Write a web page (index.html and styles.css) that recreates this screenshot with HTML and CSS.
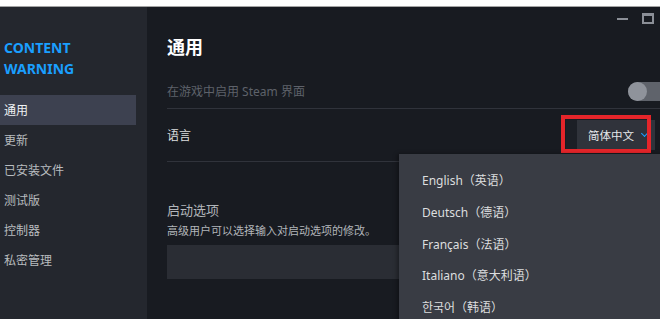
FILE: index.html
```html
<!DOCTYPE html>
<html lang="zh-CN">
<head>
  <meta charset="UTF-8">
  <title>通用</title>
  <link rel="stylesheet" href="styles.css">
</head>
<body>
  <div class="topstrip"></div>
  <div class="app">
    <aside class="sidebar">
      <div class="game-title">CONTENT<br>WARNING</div>
      <ul class="nav">
        <li class="nav-item active">通用</li>
        <li class="nav-item">更新</li>
        <li class="nav-item">已安装文件</li>
        <li class="nav-item">测试版</li>
        <li class="nav-item">控制器</li>
        <li class="nav-item">私密管理</li>
      </ul>
    </aside>

    <main class="main">
      <div class="titlebar">
        <span class="win-min"></span>
        <span class="win-max"></span>
      </div>

      <h1 class="page-title">通用</h1>

      <div class="row row-overlay">
        <span class="dim">在游戏中启用 Steam 界面</span>
        <span class="toggle"><span class="knob"></span></span>
      </div>

      <div class="row row-lang">
        <span>语言</span>
        <div class="select">
          <span class="select-label">简体中文</span>
          <span class="chevron"></span>
          <span class="highlight"></span>
        </div>
      </div>

      <section class="launch">
        <div class="launch-title">启动选项</div>
        <div class="launch-desc">高级用户可以选择输入对启动选项的修改。</div>
        <div class="launch-input"></div>
      </section>

      <ul class="menu">
        <li>English（英语）</li>
        <li>Deutsch（德语）</li>
        <li>Français（法语）</li>
        <li>Italiano（意大利语）</li>
        <li>한국어（韩语）</li>
      </ul>
    </main>
  </div>
</body>
</html>
```

FILE: styles.css
```css
* {
  margin: 0;
  padding: 0;
  box-sizing: border-box;
}

body {
  width: 660px;
  height: 319px;
  overflow: hidden;
  background: #181b21;
  font-family: "Noto Sans", "Noto Sans CJK SC", sans-serif;
  font-size: 12px;
  color: #dcdedf;
}

.topstrip {
  height: 7px;
  background: #fff;
  border-bottom: 1px solid #a4a4a4;
}

.app {
  display: flex;
  width: 672px;
  height: 312px;
}

/* left nav */
.sidebar {
  width: 147px;
  flex-shrink: 0;
  background: #24272e;
}

.game-title {
  padding: 30px 0 0 4px;
  color: #1a9fff;
  font-size: 14px;
  font-weight: bold;
  line-height: 21px;
  height: 88px;
}

.nav {
  list-style: none;
}

.nav-item {
  height: 30px;
  width: 136px;
  line-height: 31px;
  padding-left: 4px;
  color: #b8bcbf;
}

.nav-item.active {
  background: #3d4150;
  color: #f0f2f4;
}

/* main panel */
.main {
  flex: 1;
  position: relative;
  padding-left: 20px;
  padding-right: 4px;
}

.titlebar {
  height: 23px;
  display: flex;
  justify-content: flex-end;
  align-items: center;
  gap: 14px;
  padding-right: 14px;
}

.win-min {
  width: 11px;
  height: 2px;
  background: #8b8f97;
}

.win-max {
  width: 12px;
  height: 11px;
  border: 2px solid #8b8f97;
  border-top-width: 3px;
}

.page-title {
  height: 34px;
  line-height: 34px;
  font-size: 18px;
  font-weight: bold;
  color: #fff;
}

.row {
  display: flex;
  justify-content: space-between;
  align-items: center;
  border-bottom: 1px solid #30333b;
}

.row-overlay {
  height: 45px;
  padding-top: 10px;
}

.dim {
  color: #5e626a;
}

.toggle {
  width: 40px;
  height: 19px;
  border-radius: 10px;
  background: #5f636b;
  position: relative;
}

.knob {
  position: absolute;
  left: 0;
  top: 0;
  width: 19px;
  height: 19px;
  border-radius: 50%;
  background: #8f939b;
}

.row-lang {
  height: 53px;
}

.select {
  position: relative;
  width: 89px;
  height: 30px;
  margin-right: 13px;
  display: flex;
  align-items: center;
  padding-left: 22px;
  background: linear-gradient(to right, #1c1f26 11px, #30333b 11px);
  color: #e6e8ea;
  font-size: 11.5px;
}

.chevron {
  margin-left: 8px;
  width: 5px;
  height: 5px;
  border-right: 1.5px solid #1a9fff;
  border-bottom: 1.5px solid #1a9fff;
  transform: rotate(45deg);
  margin-top: -3px;
}

/* red annotation box */
.highlight {
  position: absolute;
  left: -5px;
  top: -5px;
  width: 90px;
  height: 38px;
  border: 4px solid #e5252a;
}

.launch {
  padding-top: 39px;
}

.launch-title {
  font-size: 13px;
  line-height: 18px;
  color: #b2b6ba;
}

.launch-desc {
  margin-top: 4px;
  font-size: 11px;
  line-height: 16px;
  color: #b2b6ba;
}

.launch-input {
  margin-top: 6px;
  height: 34px;
  background: #2a2d34;
}

/* dropdown list */
.menu {
  position: absolute;
  left: 252px;
  top: 147px;
  right: 0;
  height: 180px;
  list-style: none;
  padding: 11px 0 0 23px;
  background: #393c44;
  box-shadow: -2px 0 4px rgba(0, 0, 0, 0.35);
}

.menu li {
  height: 31.8px;
  line-height: 31.8px;
  color: #dcdedf;
}
```
